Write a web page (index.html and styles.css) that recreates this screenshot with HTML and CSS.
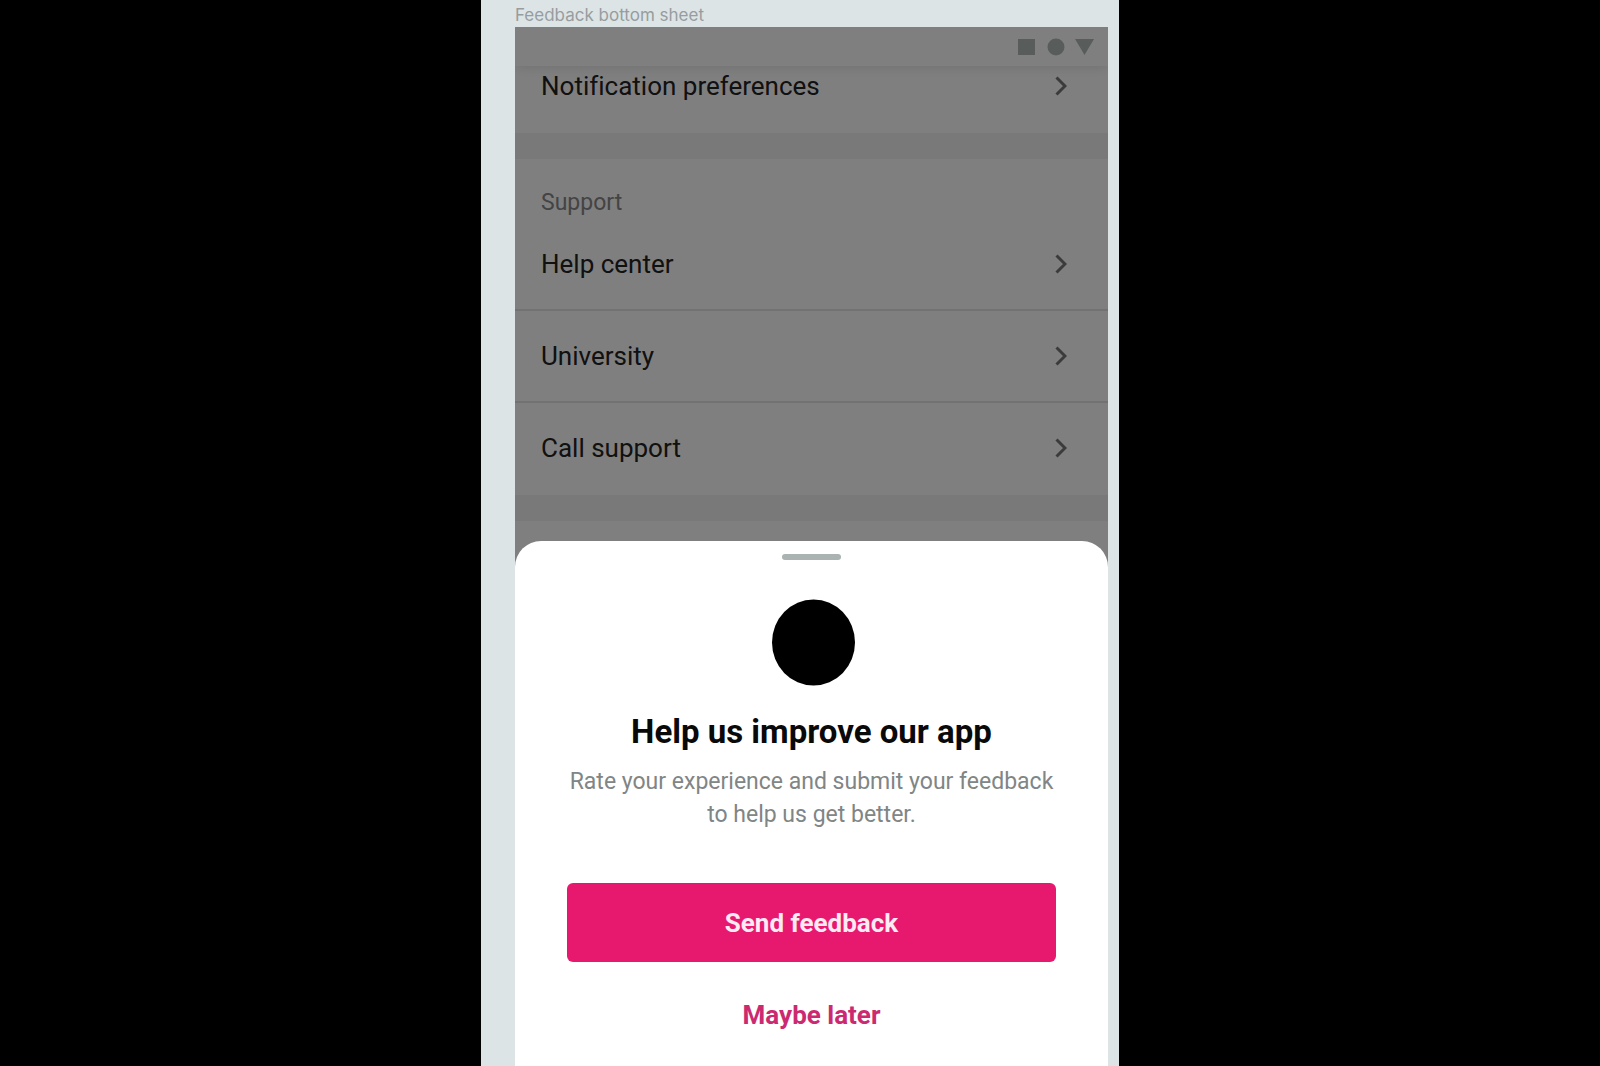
FILE: index.html
```html
<!DOCTYPE html>
<html lang="en">
<head>
  <meta charset="utf-8">
  <meta name="viewport" content="width=device-width, initial-scale=1">
  <title>Feedback bottom sheet</title>
  <link rel="stylesheet" href="styles.css">
</head>
<body>
  <div class="canvas">
    <p class="frame-label">Feedback bottom sheet</p>
    <div class="phone">
      <header class="status-bar">
        <svg class="status-icons" viewBox="0 0 76 17" aria-hidden="true">
          <rect x="0" y="0" width="17" height="16"/>
          <circle cx="38" cy="8" r="8.5"/>
          <path d="M57 0h19l-9.500 16z"/>
        </svg>
      </header>

      <main class="settings">
        <nav class="section section-first">
          <a class="row" href="#notifications">Notification preferences
            <svg class="chevron" viewBox="0 0 12 20" aria-hidden="true"><path d="M1.500 1.500 10 10l-8.500 8.500"/></svg>
          </a>
        </nav>
        <nav class="section">
          <h2 class="section-title">Support</h2>
          <a class="row" href="#help">Help center
            <svg class="chevron" viewBox="0 0 12 20" aria-hidden="true"><path d="M1.500 1.500 10 10l-8.500 8.500"/></svg>
          </a>
          <a class="row" href="#university">University
            <svg class="chevron" viewBox="0 0 12 20" aria-hidden="true"><path d="M1.500 1.500 10 10l-8.500 8.500"/></svg>
          </a>
          <a class="row" href="#call">Call support
            <svg class="chevron" viewBox="0 0 12 20" aria-hidden="true"><path d="M1.500 1.500 10 10l-8.500 8.500"/></svg>
          </a>
        </nav>
        <div class="section section-last"></div>
      </main>

      <div class="scrim"></div>

      <section class="sheet" role="dialog" aria-labelledby="sheet-title">
        <span class="handle"></span>
        <svg class="badge" viewBox="0 0 86 87" aria-hidden="true"><ellipse cx="44.500" cy="43.500" rx="41.500" ry="43"/></svg>
        <h1 class="sheet-title" id="sheet-title">Help us improve our app</h1>
        <p class="sheet-text">Rate your experience and submit your feedback to help us get better.</p>
        <button class="button button-primary" type="button">Send feedback</button>
        <button class="button button-text" type="button">Maybe later</button>
      </section>
    </div>
  </div>
</body>
</html>
```

FILE: styles.css
```css
* {
  box-sizing: border-box;
}

body {
  margin: 0;
  background: #000;
  font-family: Roboto, "Liberation Sans", sans-serif;
  font-variant-ligatures: none;
}

h1,
h2,
p {
  margin: 0;
}

.canvas {
  display: flex;
  flex-direction: column;
  max-width: 638px;
  min-height: 100vh;
  margin: 0 auto;
  padding: 0 11px 0 34px;
  background: #dce4e6;
}

.frame-label {
  padding-top: 4px;
  color: #979d9f;
  font-family: Inter, "Liberation Sans", sans-serif;
  font-size: 17px;
  line-height: 23px;
}

.phone {
  position: relative;
  display: flex;
  flex: 1;
  flex-direction: column;
  overflow: hidden;
}

.status-bar {
  position: relative;
  display: flex;
  justify-content: flex-end;
  height: 39px;
  padding: 12px 14px 0;
  background: #fff;
  box-shadow: 0 1px 12px rgba(0, 0, 0, 0.12);
  z-index: 1;
}

.status-icons {
  width: 76px;
  height: 17px;
  overflow: visible;
  fill: #b0b8b7;
}

.settings {
  display: flex;
  flex: 1;
  flex-direction: column;
  gap: 26px;
  background: #f2f2f2;
}

.section {
  background: #fff;
}

/* The first section is scrolled partly under the status bar. */
.section-first {
  margin-top: -25px;
}

.section-last {
  flex: 1;
}

.section-title {
  padding: 31px 26px 3px;
  color: #888;
  font-size: 23px;
  font-weight: 400;
  line-height: 26px;
}

.row {
  display: flex;
  align-items: center;
  justify-content: space-between;
  height: 92px;
  padding: 0 41px 0 26px;
  border-bottom: 2px solid #e4e4e4;
  color: #222;
  font-size: 26px;
  text-decoration: none;
}

.row:last-child {
  border-bottom-color: transparent;
}

.chevron {
  width: 12px;
  height: 20px;
  fill: none;
  stroke: #777;
  stroke-width: 3;
}

.scrim {
  position: absolute;
  inset: 0;
  background: rgba(0, 0, 0, 0.5);
  z-index: 2;
}

/* The page colour behind the sheet shows only at its rounded corners. */
.sheet {
  position: absolute;
  right: 0;
  bottom: 0;
  left: 0;
  display: flex;
  flex-direction: column;
  align-items: center;
  padding: 13px 52px 12px;
  border-radius: 26px 26px 0 0;
  background: #fff;
  text-align: center;
  z-index: 3;
}

.handle {
  width: 59px;
  height: 6px;
  border-radius: 3px;
  background: #abb2b2;
}

.badge {
  width: 86px;
  height: 87px;
  margin: 39px 0 26px;
}

.sheet-title {
  color: #090909;
  font-size: 33px;
  font-weight: 700;
  line-height: 40px;
}

.sheet-text {
  margin: 13px 0 52px;
  color: #808585;
  font-size: 23px;
  line-height: 33px;
}

.button {
  width: 100%;
  height: 79px;
  border: 0;
  border-radius: 6px;
  font: 700 26px Roboto, "Liberation Sans", sans-serif;
  cursor: pointer;
}

.button-primary {
  background: #e7196f;
  color: #fdeaf3;
}

.button-text {
  margin-top: 13px;
  background: none;
  color: #cc2a70;
}
```
